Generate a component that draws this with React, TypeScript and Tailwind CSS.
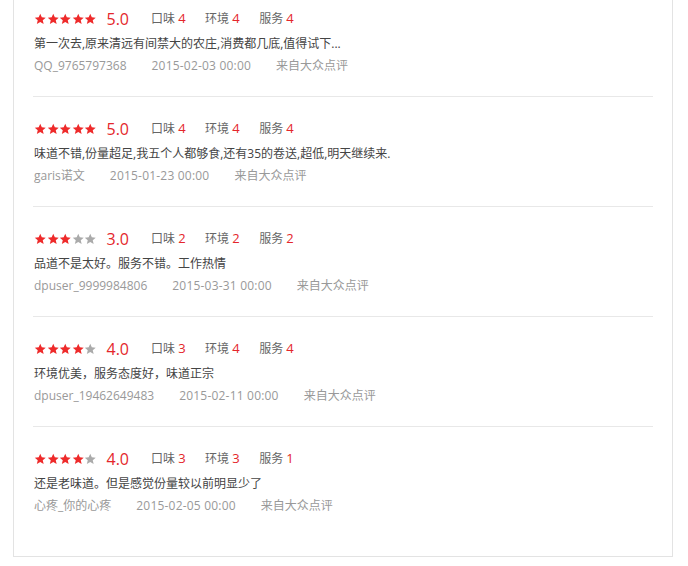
import React from 'react'

type Review = {
  id: number
  stars: number
  taste: number
  env: number
  service: number
  text: string
  user: string
  date: string
}

const reviews: Review[] = [
  {
    id: 1,
    stars: 5,
    taste: 4,
    env: 4,
    service: 4,
    text: '第一次去,原来清远有间禁大的农庄,消费都几底,值得试下...',
    user: 'QQ_9765797368',
    date: '2015-02-03 00:00',
  },
  {
    id: 2,
    stars: 5,
    taste: 4,
    env: 4,
    service: 4,
    text: '味道不错,份量超足,我五个人都够食,还有35的卷送,超低,明天继续来.',
    user: 'garis诺文',
    date: '2015-01-23 00:00',
  },
  {
    id: 3,
    stars: 3,
    taste: 2,
    env: 2,
    service: 2,
    text: '品道不是太好。服务不错。工作热情',
    user: 'dpuser_9999984806',
    date: '2015-03-31 00:00',
  },
  {
    id: 4,
    stars: 4,
    taste: 3,
    env: 4,
    service: 4,
    text: '环境优美，服务态度好，味道正宗',
    user: 'dpuser_19462649483',
    date: '2015-02-11 00:00',
  },
  {
    id: 5,
    stars: 4,
    taste: 3,
    env: 3,
    service: 1,
    text: '还是老味道。但是感觉份量较以前明显少了',
    user: '心疼_你的心疼',
    date: '2015-02-05 00:00',
  },
]

function Star({ on }: { on: boolean }) {
  return (
    <svg viewBox="0 0 24 24" className="h-[12px] w-[12.5px]">
      <path
        d="M12 1.5l3.1 7.2 7.8.6-5.9 5.1 1.8 7.6L12 18l-6.8 4 1.8-7.6-5.9-5.1 7.8-.6z"
        fill={on ? '#ee2a2a' : '#aaaaaa'}
      />
    </svg>
  )
}

function SubScore({ label, value }: { label: string; value: number }) {
  return (
    <span className="text-[12px] text-[#666]">
      {label} <span className="text-[13px] text-[#e4262b]">{value}</span>
    </span>
  )
}

export default function App() {
  return (
    <div
      className="min-h-[566px] bg-white pr-[15px] pl-[13px]"
      style={{ fontFamily: '"Open Sans", "Noto Sans CJK SC", sans-serif' }}
    >
      <div className="-mt-[13px] border border-t-0 border-[#e3e3e3] px-[19px] pb-[20px]">
        {reviews.map((r, i) => (
          <div
            key={r.id}
            className={
              i === reviews.length - 1
                ? 'pt-[22px] pb-[19px]'
                : 'border-b border-[#e8e8e8] pt-[22px] pb-[19px]'
            }
          >
            <div className="flex h-[20px] items-center pl-[1px]">
              <div className="flex">
                {[0, 1, 2, 3, 4].map((n) => (
                  <Star key={n} on={n < r.stars} />
                ))}
              </div>
              <span className="ml-[10px] text-[16px] leading-none text-[#e4262b]">
                {r.stars.toFixed(1)}
              </span>
              <div className="ml-[22px] flex gap-[19.5px]">
                <SubScore label="口味" value={r.taste} />
                <SubScore label="环境" value={r.env} />
                <SubScore label="服务" value={r.service} />
              </div>
            </div>
            <p className="mt-[4px] h-[22px] pl-[1px] text-[12px] leading-[22px] text-[#444]">
              {r.text}
            </p>
            <div className="flex h-[22px] gap-[25px] pl-[1px] text-[12px] leading-[22px] text-[#999]">
              <span>{r.user}</span>
              <span className="tracking-[0.2px]">{r.date}</span>
              <span>来自大众点评</span>
            </div>
          </div>
        ))}
      </div>
    </div>
  )
}
